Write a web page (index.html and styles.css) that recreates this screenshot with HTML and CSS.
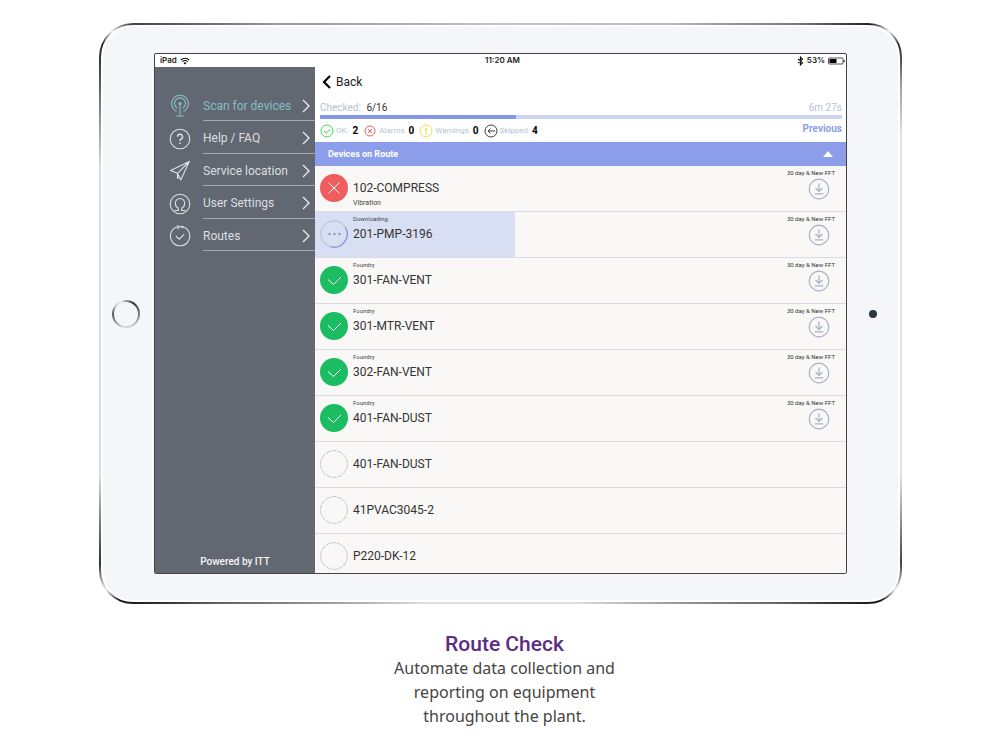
FILE: index.html
```
<!DOCTYPE html>
<html lang="en">
<head>
<meta charset="utf-8">
<title>Route Check</title>
<link rel="stylesheet" href="styles.css">
</head>
<body>
<svg class="sprite" aria-hidden="true">
  <symbol id="chevron" viewBox="0 0 10 16"><path d="M2 2l6 6-6 6" fill="none" stroke="currentColor" stroke-width="1.4"/></symbol>
  <symbol id="tick" viewBox="0 0 28 28"><path d="M8 13.500l5.500 5L21 11" fill="none" stroke="currentColor" stroke-width="1"/></symbol>
  <symbol id="ring" viewBox="0 0 28 28"><circle cx="14" cy="14" r="13.400" fill="none" stroke="currentColor" stroke-width="1" stroke-dasharray="5 1"/></symbol>
  <symbol id="download" viewBox="0 0 22 22"><g fill="none" stroke="currentColor" stroke-width="1.200"><circle cx="11" cy="11" r="9.800"/><path d="M11 5.500v7.500M7.500 10l3.500 3.500 3.500-3.500M6.800 15.800h8.400"/></g></symbol>
</svg>
<main class="page">
  <div class="device">
    <div class="face">
      <div class="side side-left"><span class="home"></span></div>
      <div class="screen">
        <header class="status">
          <span class="status-left">iPad
            <svg width="10" height="8" viewBox="0 0 10 8"><path d="M.8 3a6 6 0 0 1 8.400 0M2.300 4.700a4 4 0 0 1 5.400 0" fill="none" stroke="#111" stroke-width="1.100"/><path d="M5 7.500L3.500 5.900a2.200 2.200 0 0 1 3 0z"/></svg>
          </span>
          <span>11:20 AM</span>
          <span class="status-right">
            <svg width="7" height="10" viewBox="0 0 7 10"><path d="M1 2.800l4.500 4L3.400 9V1l2.100 2.200-4.500 4" fill="none" stroke="#111" stroke-width="1.100"/></svg>
            53%
            <svg width="17" height="8" viewBox="0 0 17 8"><rect x=".5" y="1" width="14.500" height="6" rx="1" fill="none" stroke="#222" stroke-width=".8"/><path d="M1.500 2h7v4h-7zM15.600 3h1v2h-1z"/></svg>
          </span>
        </header>
        <div class="app">
          <nav class="menu">
            <ul>
              <li class="active"><svg class="menu-icon" viewBox="0 0 22 24"><g fill="none" stroke="currentColor" stroke-width="1.100"><path d="M7.500 17.300A8.400 8.400 0 1 1 14.500 17.300M8.300 14.200a5.500 5.500 0 1 1 5.400 0M11 9v13M7 22h8"/></g><circle cx="11" cy="9.500" r="1.600" fill="currentColor"/></svg><a href="#scan">Scan for devices<svg><use href="#chevron"/></svg></a></li>
              <li><svg class="menu-icon" viewBox="0 0 22 22"><circle cx="11" cy="11" r="9.800" fill="none" stroke="currentColor" stroke-width="1.100"/><path d="M8.500 8.800a2.500 2.500 0 1 1 3.700 2.200c-.9.500-1.200.9-1.200 2M11 14.400V16" fill="none" stroke="currentColor" stroke-width="1.500"/></svg><a href="#help">Help / FAQ<svg><use href="#chevron"/></svg></a></li>
              <li><svg class="menu-icon" viewBox="0 0 22 22"><path d="M20.300 1.500L1.500 10.500l7 2.800 3.300 6.700zM20.300 1.500L8.500 13.300v5l1.800-1.600" fill="none" stroke="currentColor" stroke-width="1.100" stroke-linejoin="round"/></svg><a href="#service">Service location<svg><use href="#chevron"/></svg></a></li>
              <li><svg class="menu-icon" viewBox="0 0 22 22"><g fill="none" stroke="currentColor" stroke-width="1.100"><circle cx="11" cy="11" r="9.800"/><path d="M5.500 17.500h3.800v-2.300c-1.800-1-3-2.700-3-5a4.700 4.700 0 0 1 9.400 0c0 2.300-1.200 4-3 5v2.300h3.800"/></g></svg><a href="#user">User Settings<svg><use href="#chevron"/></svg></a></li>
              <li><svg class="menu-icon" viewBox="0 0 22 22"><g fill="none" stroke="currentColor" stroke-width="1.100"><path d="M7 2.300a9.700 9.700 0 1 0 8.200 0M6.800 11l3.500 3.200 5-5M10.500 1.500h2"/><circle cx="9" cy="1.900" r="1.200"/></g><circle cx="13.500" cy="2" r="1.300" fill="currentColor"/></svg><a href="#routes">Routes<svg><use href="#chevron"/></svg></a></li>
            </ul>
            <p class="powered">Powered by ITT</p>
          </nav>
          <section class="route">
            <button class="back" type="button"><svg width="9" height="16" viewBox="0 0 9 16"><path d="M8 2L2 8l6 6" fill="none" stroke="#000" stroke-width="2.200"/></svg>Back</button>
            <div class="summary">
              <div class="checked"><span>Checked: <b>6/16</b></span><span class="time">6m 27s</span></div>
              <div class="track"><div class="fill"></div></div>
              <div class="counts">
                <svg viewBox="0 0 14 14"><g fill="none" stroke="#3fd94a"><circle cx="7" cy="7" r="6"/><path d="M4 7l2.300 2.300L10.200 5"/></g></svg><span>OK:</span><b>2</b>
                <svg viewBox="0 0 14 14"><g fill="none" stroke="#f2605f"><circle cx="7" cy="7" r="5"/><path d="M5 5l4 4M9 5L5 9"/></g></svg><span>Alarms</span><b>0</b>
                <svg viewBox="0 0 14 14"><g fill="none" stroke="#f7d944"><circle cx="7" cy="7" r="6"/><path d="M7 3.800v4M7 9v1.400" stroke-width="1.400"/></g></svg><span>Warnings</span><b>0</b>
                <svg viewBox="0 0 14 14"><g fill="none" stroke="#3c3c3c"><circle cx="7" cy="7" r="6"/><path d="M4 7h7M6.500 4.500L4 7l2.500 2.500"/></g></svg><span>Skipped</span><b>4</b>
                <a class="previous" href="#previous">Previous</a>
              </div>
            </div>
            <button class="group" type="button">Devices on Route<svg width="10" height="6" viewBox="0 0 10 6"><path d="M5 0l5 6H0z" fill="#fff"/></svg></button>
            <ul class="devices">
              <li><span class="badge alarm"><svg viewBox="0 0 28 28"><path d="M8.500 8.500l11 11M19.500 8.500l-11 11" stroke="#fff" stroke-width="1"/></svg></span><span class="name"><small></small>102-COMPRESS<small class="kind">Vibration</small></span><span class="fft">30 day &amp; New FFT<svg><use href="#download"/></svg></span></li>
              <li class="loading"><span class="badge"><svg viewBox="0 0 28 28"><circle cx="14" cy="14" r="13.200" fill="none" stroke="#bcc5d9" stroke-width="1.200"/><path d="M25.500 7.500A13.200 13.200 0 0 1 10.500 26.700" fill="none" stroke="#8498ea" stroke-width="1.300"/><g fill="#8d9ab8"><circle cx="9.500" cy="14" r="1.200"/><circle cx="14.500" cy="14" r="1.200"/><circle cx="19.500" cy="14" r="1.200"/></g></svg></span><span class="name"><small>Downloading</small>201-PMP-3196</span><span class="fft">30 day &amp; New FFT<svg><use href="#download"/></svg></span></li>
              <li><span class="badge ok"><svg><use href="#tick"/></svg></span><span class="name"><small>Foundry</small>301-FAN-VENT</span><span class="fft">30 day &amp; New FFT<svg><use href="#download"/></svg></span></li>
              <li><span class="badge ok"><svg><use href="#tick"/></svg></span><span class="name"><small>Foundry</small>301-MTR-VENT</span><span class="fft">30 day &amp; New FFT<svg><use href="#download"/></svg></span></li>
              <li><span class="badge ok"><svg><use href="#tick"/></svg></span><span class="name"><small>Foundry</small>302-FAN-VENT</span><span class="fft">30 day &amp; New FFT<svg><use href="#download"/></svg></span></li>
              <li><span class="badge ok"><svg><use href="#tick"/></svg></span><span class="name"><small>Foundry</small>401-FAN-DUST</span><span class="fft">30 day &amp; New FFT<svg><use href="#download"/></svg></span></li>
              <li><span class="badge empty"><svg><use href="#ring"/></svg></span><span class="name"><small></small>401-FAN-DUST</span></li>
              <li><span class="badge empty"><svg><use href="#ring"/></svg></span><span class="name"><small></small>41PVAC3045-2</span></li>
              <li class="last"><span class="badge empty"><svg><use href="#ring"/></svg></span><span class="name"><small></small>P220-DK-12</span></li>
            </ul>
          </section>
        </div>
      </div>
      <div class="side"><span class="camera"></span></div>
    </div>
  </div>
  <section class="caption">
    <h1>Route Check</h1>
    <p>Automate data collection and reporting on equipment throughout the plant.</p>
  </section>
</main>
</body>
</html>
```
FILE: styles.css
```
* { box-sizing: border-box; }
body { margin: 0; background: #fff; font-family: Roboto, "Liberation Sans", sans-serif; color: #333; }
ul { list-style: none; margin: 0; padding: 0; }
p, h1 { margin: 0; }
a { color: inherit; text-decoration: none; }
button { border: 0; margin: 0; background: none; font: inherit; text-align: left; }
.sprite { display: none; }
.page { padding: 23px 98px 20px 99px; }

.device {
  padding: 2px;
  border-radius: 34px;
  background: conic-gradient(#c4c4c4 0deg, #bbb 30deg, #777 46deg, #222 52deg, #eee 54deg, #222 56deg, #999 60deg, #e2e2e2 66deg, #e2e2e2 112deg, #888 118deg, #444 122deg, #eee 125deg, #111 127deg, #666 136deg, #ddd 165deg, #ddd 195deg, #666 224deg, #111 233deg, #eee 235deg, #333 238deg, #777 242deg, #ddd 248deg, #ddd 290deg, #777 298deg, #222 304deg, #eee 306deg, #444 308deg, #999 322deg, #c4c4c4 360deg);
}
.face { display: grid; grid-template-columns: 51px minmax(0, 1fr) 51px; padding: 26px 0; border: 2px solid #fff; border-radius: 32px; background: #f5f6f9; }
.side { display: flex; align-items: center; justify-content: center; }
.side-left { padding-right: 5px; }
.home { width: 28px; height: 28px; padding: 2px; border-radius: 50%; background: conic-gradient(#999, #333 35deg, #777 90deg, #bbb 130deg, #ddd 190deg, #555 270deg, #ccc 310deg, #eee 340deg, #999); }
.home::before { content: ""; display: block; height: 100%; border-radius: 50%; background: #f5f6f9; }
.camera { width: 8px; height: 8px; border: 2px solid #333; border-radius: 50%; background: #1f3a66; }

.screen { border: 1px solid #444; border-radius: 2px; background: #fff; overflow: hidden; }
.status { display: grid; grid-template-columns: 1fr auto 1fr; align-items: center; height: 13px; padding: 0 1px 0 5px; font: 600 8px/13px Inter, sans-serif; color: #222; }
.status-left, .status-right { display: flex; align-items: center; gap: 3px; }
.status-right { justify-content: flex-end; }
.app { display: grid; grid-template-columns: 160px minmax(0, 1fr); }

.menu { display: flex; flex-direction: column; justify-content: space-between; padding: 22px 0 4px; background: #616871; color: #dcdfe2; }
.menu li { display: grid; grid-template-columns: 22px 1fr; column-gap: 12px; align-items: center; padding-left: 14px; }
.menu-icon { width: 22px; height: 24px; margin-top: 2px; }
.menu a { display: flex; justify-content: space-between; align-items: center; height: 33px; padding: 2px 4px 0 0; border-bottom: 1px solid #a4a9af; font-size: 12px; }
.menu li:nth-child(odd) a { height: 32px; }
.menu a svg { width: 10px; height: 16px; color: #e8eaec; }
.menu .active { color: #86bcc7; }
.powered { text-align: center; font-size: 10px; line-height: 14px; font-weight: 500; color: #f4f5f6; }

.back { display: flex; align-items: center; gap: 5px; padding: 7px 7px 6px; font-size: 12px; line-height: 16px; color: #222; }
.summary { padding: 6px 4px 0 5px; color: #b5bfd3; }
.checked { display: flex; justify-content: space-between; padding-bottom: 1px; font-size: 10px; line-height: 12px; }
.checked b { margin-left: 3px; font-weight: 400; color: #333; }
.track { height: 4px; background: #cbd4f1; }
.fill { width: 37.500%; height: 4px; background: #8498e6; }
.counts { display: flex; align-items: center; height: 23px; font-size: 8px; }
.counts svg { width: 14px; height: 14px; margin-right: 2px; }
.counts b { margin: 0 5px 0 4px; font-size: 10px; color: #000; }
.previous { margin-left: auto; padding-bottom: 3px; font-size: 10px; line-height: 12px; font-weight: 700; color: #8c9eea; }
.group { display: flex; width: 100%; justify-content: space-between; align-items: center; height: 24px; padding: 0 13px; background: #8c9ee9; color: #fff; font-size: 9px; font-weight: 700; }

.devices { background: #f9f8f6; }
.devices li { display: grid; grid-template-columns: 28px 1fr auto; column-gap: 5px; height: 46px; padding: 0 11px 0 5px; border-bottom: 1px solid #d9dae3; }
.devices .last { height: 39px; border: 0; }
.devices .loading { background: linear-gradient(90deg, #d9dff3 200px, transparent 200px); }
.badge { width: 28px; height: 28px; margin-top: 8px; border-radius: 50%; }
.badge svg { display: block; width: 28px; height: 28px; color: #fff; }
.alarm { background: #f15c5e; }
.ok { background: #1bbc62; }
.badge.empty svg { color: #bcc4d5; }
.name { font-size: 12px; line-height: 14px; padding-top: 4px; }
.name small { display: block; height: 11px; font-size: 6px; line-height: 6px; color: #444; }
.name .kind { padding-top: 3px; font-size: 7px; line-height: 10px; }
.fft { display: flex; flex-direction: column; align-items: flex-end; gap: 1px; padding-top: 3px; font-size: 6px; line-height: 8px; }
.fft svg { width: 22px; height: 22px; margin-right: 5px; color: #a3b1c8; }

.caption { width: 240px; margin: 28px auto 0; padding-left: 8px; text-align: center; }
.caption h1 { font-size: 21px; line-height: 24px; font-weight: 500; color: #5b2d82; }
.caption p { font: 16px/24px "Noto Sans", sans-serif; color: #444; }
```
